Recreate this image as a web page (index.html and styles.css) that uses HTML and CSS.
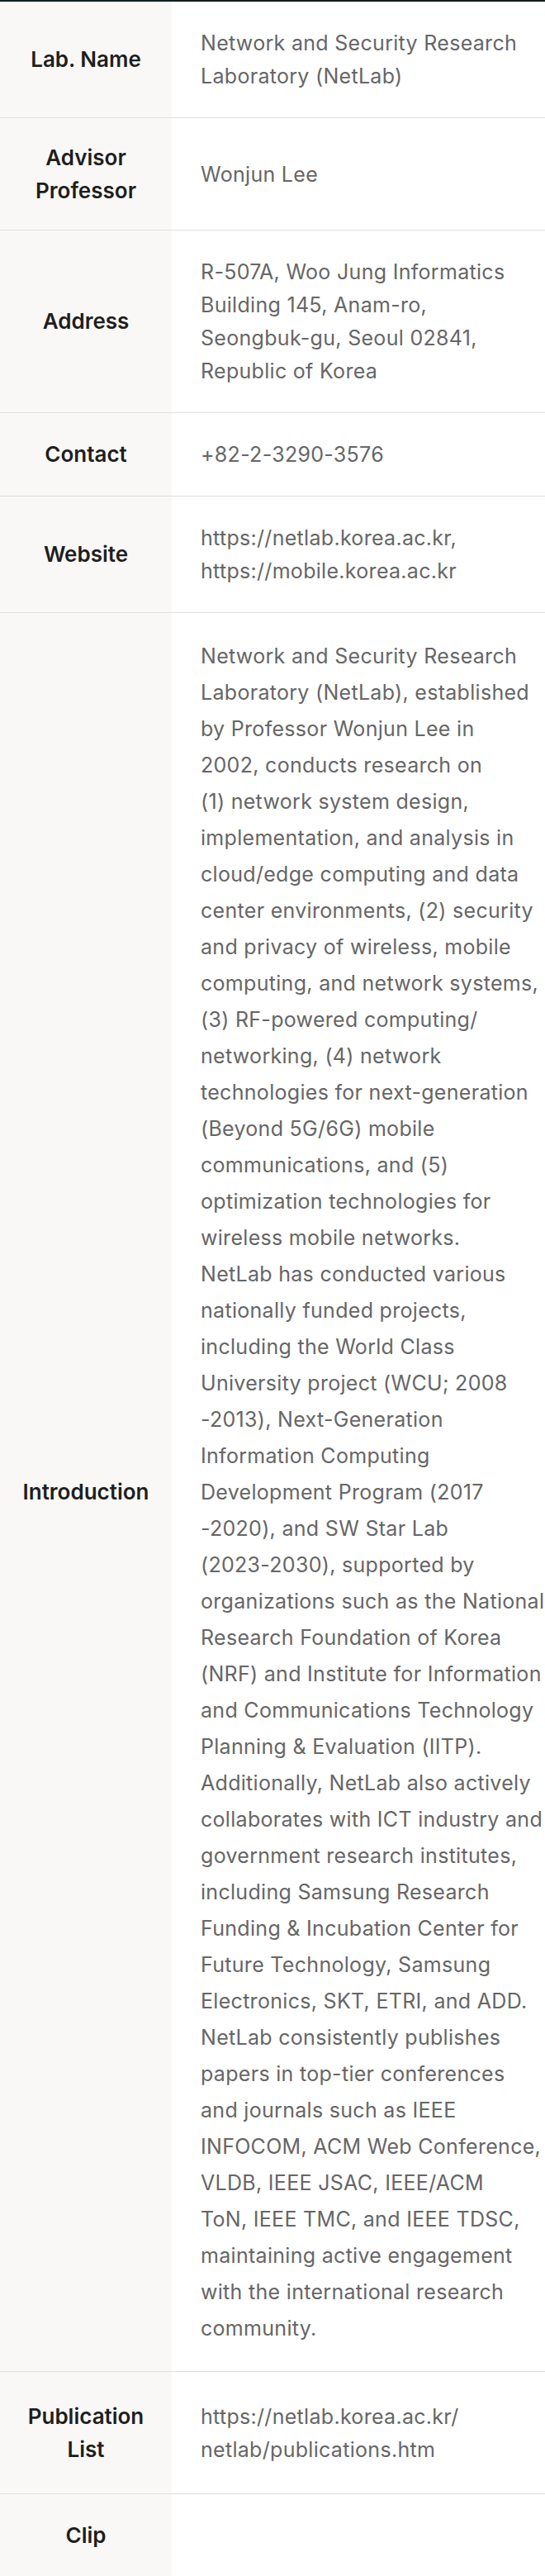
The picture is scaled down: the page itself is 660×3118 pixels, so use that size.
FILE: index.html
```html
<!DOCTYPE html>
<html lang="en">
<head>
    <meta charset="UTF-8">
    <meta name="viewport" content="width=device-width, initial-scale=1.0">
    <title>NetLab - Lab Info</title>
    <link rel="stylesheet" href="styles.css">
</head>
<body>
    <table class="lab-info">
        <tbody>
            <tr>
                <th>Lab. Name</th>
                <td>Network and Security Research Laboratory (NetLab)</td>
            </tr>
            <tr class="row-tight">
                <th>Advisor Professor</th>
                <td>Wonjun Lee</td>
            </tr>
            <tr>
                <th>Address</th>
                <td>R-507A, Woo Jung Informatics<br>Building 145, Anam-ro,<br>Seongbuk-gu, Seoul 02841,<br>Republic of Korea</td>
            </tr>
            <tr>
                <th>Contact</th>
                <td>+82-2-3290-3576</td>
            </tr>
            <tr>
                <th>Website</th>
                <td>https://netlab.korea.ac.kr, https://mobile.korea.ac.kr</td>
            </tr>
            <tr>
                <th>Introduction</th>
                <td class="intro">Network and Security Research<br>
                    Laboratory (NetLab), established<br>
                    by Professor Wonjun Lee in<br>
                    2002, conducts research on<br>
                    (1) network system design,<br>
                    implementation, and analysis in<br>
                    cloud/edge computing and data<br>
                    center environments, (2) security<br>
                    and privacy of wireless, mobile<br>
                    computing, and network systems,<br>
                    (3) RF-powered computing/<br>
                    networking, (4) network<br>
                    technologies for next-generation<br>
                    (Beyond 5G/6G) mobile<br>
                    communications, and (5)<br>
                    optimization technologies for<br>
                    wireless mobile networks.<br>
                    NetLab has conducted various<br>
                    nationally funded projects,<br>
                    including the World Class<br>
                    University project (WCU; 2008<br>
                    -2013), Next-Generation<br>
                    Information Computing<br>
                    Development Program (2017<br>
                    -2020), and SW Star Lab<br>
                    (2023-2030), supported by<br>
                    organizations such as the National<br>
                    Research Foundation of Korea<br>
                    (NRF) and Institute for Information<br>
                    and Communications Technology<br>
                    Planning &amp; Evaluation (IITP).<br>
                    Additionally, NetLab also actively<br>
                    collaborates with ICT industry and<br>
                    government research institutes,<br>
                    including Samsung Research<br>
                    Funding &amp; Incubation Center for<br>
                    Future Technology, Samsung<br>
                    Electronics, SKT, ETRI, and ADD.<br>
                    NetLab consistently publishes<br>
                    papers in top-tier conferences<br>
                    and journals such as IEEE<br>
                    INFOCOM, ACM Web Conference,<br>
                    VLDB, IEEE JSAC, IEEE/ACM<br>
                    ToN, IEEE TMC, and IEEE TDSC,<br>
                    maintaining active engagement<br>
                    with the international research<br>
                    community.</td>
            </tr>
            <tr class="row-loose">
                <th>Publication List</th>
                <td>https://netlab.korea.ac.kr/<wbr>netlab/publications.htm</td>
            </tr>
            <tr>
                <th>Clip</th>
                <td></td>
            </tr>
        </tbody>
    </table>
</body>
</html>
```

FILE: styles.css
```css
body {
    margin: 0;
    padding: 0;
    background: #fff;
    font-family: 'Inter', 'Noto Sans', sans-serif;
    font-size: 25px;
    letter-spacing: 0.3px;
    color: #666;
}

.lab-info {
    width: 100%;
    border-collapse: collapse;
    border-top: 2px solid #0f1f1d;
    table-layout: fixed;
}

.lab-info tr {
    border-bottom: 1px solid #dedede;
}

.lab-info th {
    box-sizing: border-box;
    width: 208px;
    padding: 30px 16px;
    background-color: #f9f8f6;
    color: #1e1e1e;
    font-size: 26px;
    font-weight: 600;
    letter-spacing: 0;
    line-height: 40px;
    text-align: center;
    vertical-align: middle;
}

.lab-info td {
    padding: 30px 0 30px 35px;
    line-height: 40px;
    text-align: left;
    vertical-align: middle;
}

.lab-info td.intro {
    line-height: 44px;
}

.lab-info .row-tight th {
    padding-top: 28px;
    padding-bottom: 27px;
}

.lab-info .row-loose th {
    padding-top: 34px;
    padding-bottom: 33px;
}
```
